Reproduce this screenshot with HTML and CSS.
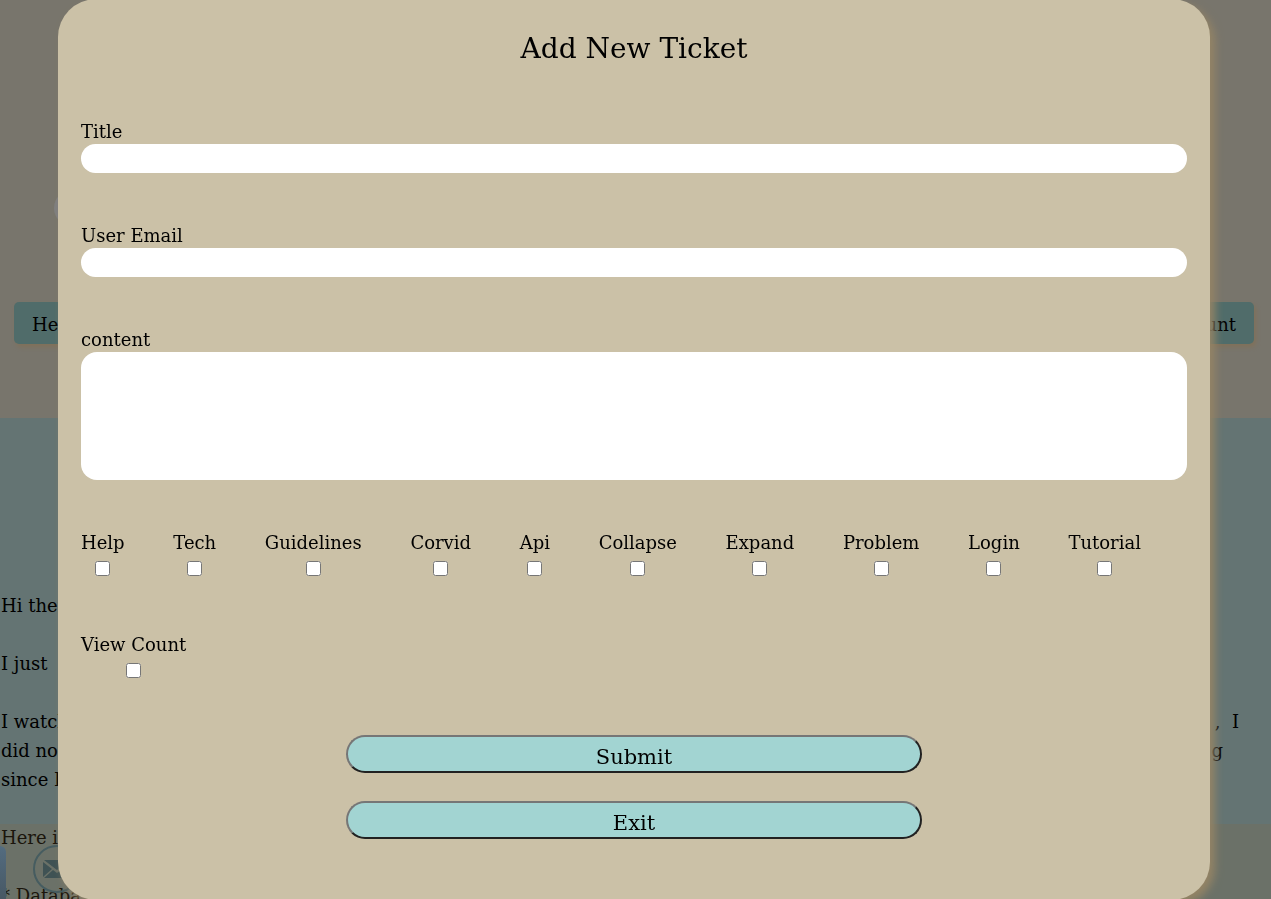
FILE: index.html
```
<!DOCTYPE html>
<html lang="en">
<head>
<meta charset="utf-8">
<meta name="viewport" content="width=device-width, initial-scale=1">
<title>Add New Ticket</title>
<link rel="stylesheet" href="styles.css">
</head>
<body>
<div class="page">
  <header class="header">
    <div class="avatar"></div>
    <nav class="nav">
      <a class="nav-link" href="#help">Help</a>
      <a class="nav-link" href="#account">Account</a>
    </nav>
  </header>
  <main class="article">
    <p class="line">Hi there</p>
    <p class="line">I just</p>
    <div class="paragraph">
      <p class="line"><span>I watch</span><span>,&nbsp; I</span></p>
      <p class="line"><span>did not</span><span class="line-end">g</span></p>
      <p class="line">since I</p>
    </div>
    <p class="line">Here is</p>
    <p class="line">* Databa</p>
  </main>
</div>
<footer class="footer">
  <span class="social"></span>
  <svg class="mail" viewBox="0 0 50 50" aria-hidden="true">
    <circle cx="25" cy="25" r="23" fill="none" stroke="#465c60" stroke-width="2"/>
    <path d="M12 16h26L25 26z M11 18l9 7-9 8z M39 18l-9 7 9 8z M12 34l9-8 4 3 4-3 9 8z" fill="#3f5254"/>
  </svg>
</footer>
<div class="overlay">
  <form class="modal" role="dialog" aria-labelledby="modal-title">
    <h1 class="modal-title" id="modal-title">Add New Ticket</h1>
    <div class="field">
      <label for="title">Title</label>
      <input class="control" id="title" type="text">
    </div>
    <div class="field">
      <label for="email">User Email</label>
      <input class="control" id="email" type="email">
    </div>
    <div class="field">
      <label for="content">content</label>
      <textarea class="control control-area" id="content"></textarea>
    </div>
    <div class="tags">
      <label class="tag">Help<input class="check" type="checkbox"></label>
      <label class="tag">Tech<input class="check" type="checkbox"></label>
      <label class="tag">Guidelines<input class="check" type="checkbox"></label>
      <label class="tag">Corvid<input class="check" type="checkbox"></label>
      <label class="tag">Api<input class="check" type="checkbox"></label>
      <label class="tag">Collapse<input class="check" type="checkbox"></label>
      <label class="tag">Expand<input class="check" type="checkbox"></label>
      <label class="tag">Problem<input class="check" type="checkbox"></label>
      <label class="tag">Login<input class="check" type="checkbox"></label>
      <label class="tag">Tutorial<input class="check" type="checkbox"></label>
    </div>
    <div class="tags">
      <label class="tag">View Count<input class="check" type="checkbox"></label>
    </div>
    <div class="actions">
      <button class="action" type="submit">Submit</button>
      <button class="action" type="button">Exit</button>
    </div>
  </form>
</div>
</body>
</html>
```
FILE: styles.css
```
* { box-sizing: border-box; }

body {
  margin: 0;
  overflow: hidden;
  background: #78756c;
  color: #000;
  font-family: "DejaVu Serif", serif;
  font-size: 18px;
  line-height: 24px;
}

.page {
  height: 100vh;
  overflow: hidden;
}

.header {
  height: 418px;
  padding: 190px 17px 0 14px;
}

.avatar {
  width: 36px;
  height: 36px;
  margin-left: 40px;
  border-radius: 50%;
  background: #7f7f80;
}

.nav {
  display: flex;
  justify-content: space-between;
  margin-top: 76px;
}

.nav-link {
  padding: 11px 18px 7px;
  border-radius: 5px;
  background: #506c6a;
  box-shadow: 2px 3px 4px #80715a;
  color: #000;
  text-decoration: none;
}

.article {
  display: flex;
  flex-direction: column;
  gap: 29px;
  min-height: 481px;
  padding: 173px 32px 0 1px;
  background: #647473;
  line-height: 29px;
}

.line {
  display: flex;
  justify-content: space-between;
  margin: 0;
}

.line-end { padding-right: 16px; }

.footer {
  position: fixed;
  inset: auto 0 0;
  display: flex;
  align-items: flex-start;
  gap: 26px;
  height: 75px;
  padding-top: 20px;
  background: rgba(135, 106, 60, 0.2);
}

.social {
  width: 6px;
  height: 60px;
  margin-top: 2px;
  border-radius: 0 6px 0 0;
  background: linear-gradient(#536c80, #465560);
}

.mail {
  width: 50px;
  height: 50px;
}

.overlay {
  position: fixed;
  inset: 0;
  display: flex;
  align-items: center;
  justify-content: center;
  padding-right: 3px;
}

.modal {
  display: flex;
  flex: 0 0 auto;
  flex-direction: column;
  gap: 51px;
  width: calc(100% - 116px);
  padding: 30px 23px 61px;
  border-radius: 38px;
  background: #cbc1a7;
  box-shadow: 5px 5px 8px #948465;
}

.modal-title {
  margin: 0;
  font-size: 28px;
  font-weight: 400;
  line-height: 40px;
  text-align: center;
}

.field {
  display: flex;
  flex-direction: column;
}

.control {
  width: 100%;
  height: 29px;
  padding: 0 14px;
  border: 0;
  border-radius: 15px;
  background: #fff;
  font: inherit;
}

.control-area {
  height: 128px;
  padding: 10px 14px;
  border-radius: 16px;
  resize: none;
}

.tags {
  display: flex;
  justify-content: space-between;
  padding-right: 46px;
}

.tag {
  display: flex;
  flex-direction: column;
  align-items: center;
}

.check {
  width: 15px;
  height: 15px;
  margin: 6px 0;
}

.actions {
  display: flex;
  flex-direction: column;
  align-items: center;
  gap: 28px;
}

.action {
  width: 52%;
  height: 38px;
  padding: 5px 0 0;
  border: 2px solid;
  border-color: #767676 #212121 #212121 #767676;
  border-radius: 19px;
  background: #a2d4d2;
  color: #000;
  font: inherit;
  font-size: 21px;
}
```
